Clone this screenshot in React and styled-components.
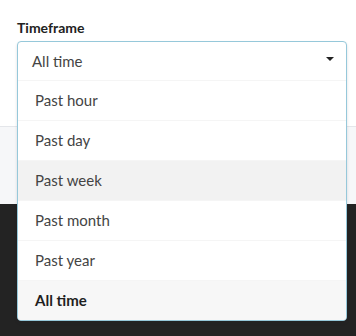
import React, { useState } from 'react';
import styled, { createGlobalStyle } from 'styled-components';

const Global = createGlobalStyle`
  html, body { margin: 0; padding: 0; background: #232323; }
  body { font-family: Lato, "Open Sans", sans-serif; }
`;

const Page = styled.div`
  width: 356px;
  height: 336px;
  display: flex;
  flex-direction: column;
  overflow: hidden;
`;

const Top = styled.section`
  height: 126px;
  background: #fff;
  padding: 20px 17px 0 17px;
  box-sizing: border-box;
`;

const Band = styled.div`
  height: 78px;
  background: #f6f7f9;
  border-top: 1px solid #e4e6ea;
  box-sizing: border-box;
`;

const Footer = styled.footer`
  flex: 1;
  background: #232323;
`;

const Label = styled.label`
  display: block;
  font-size: 14px;
  font-weight: 700;
  color: #222;
  line-height: 16px;
  margin-bottom: 5px;
`;

const Field = styled.div`
  position: relative;
  width: 330px;
`;

const Select = styled.div`
  position: absolute;
  top: 0;
  left: 0;
  right: 0;
  z-index: 5;
  background: #fff;
  border: 1px solid #96c8da;
  border-radius: 4px;
  box-shadow: 0 2px 3px 0 rgba(34, 36, 38, 0.15);
  overflow: hidden;
`;

const Head = styled.div`
  height: 38px;
  display: flex;
  align-items: center;
  justify-content: space-between;
  padding: 0 12px 0 14px;
  font-size: 15px;
  color: #444;
`;

const Caret = styled.span`
  width: 0;
  height: 0;
  border-left: 4px solid transparent;
  border-right: 4px solid transparent;
  border-top: 4px solid #222;
  margin-top: -4px;
`;

const Item = styled.div`
  height: 40px;
  display: flex;
  align-items: center;
  padding: 0 17px 1px;
  border-top: 1px solid #f5f5f5;
  box-sizing: border-box;
  font-size: 15px;
  color: ${p => (p.$active ? '#1f1f1f' : '#444')};
  font-weight: ${p => (p.$active ? 700 : 400)};
  background: ${p => (p.$hover ? '#f2f2f2' : p.$active ? '#f7f7f7' : '#fff')};
`;

const options = ['Past hour', 'Past day', 'Past week', 'Past month', 'Past year', 'All time'];

export default function App() {
  const [value] = useState('All time');
  return (
    <Page>
      <Global />
      <Top>
        <Label>Timeframe</Label>
        <Field>
          <Select>
            <Head>
              <span>{value}</span>
              <Caret />
            </Head>
            {options.map(o => (
              <Item key={o} $active={o === value} $hover={o === 'Past week'}>
                {o}
              </Item>
            ))}
          </Select>
        </Field>
      </Top>
      <Band />
      <Footer />
    </Page>
  );
}
